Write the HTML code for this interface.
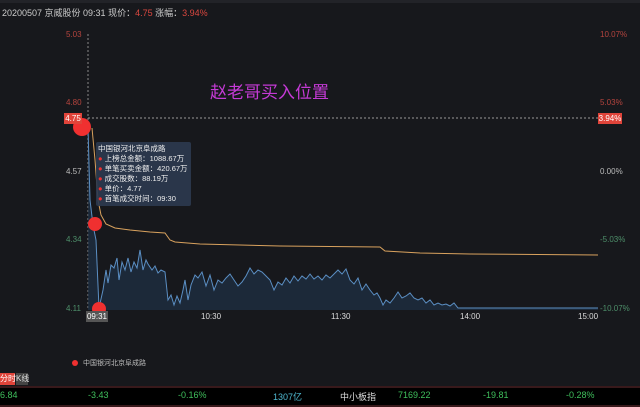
<!DOCTYPE html>
<html><head><meta charset="utf-8"><style>
body{margin:0;width:640px;height:407px;background:#17181c;overflow:hidden;position:relative;font-family:"Liberation Sans","Noto Sans CJK SC",sans-serif;}
.a{position:absolute;white-space:nowrap}
</style></head><body>
<div class="a" style="left:0;top:0;width:640px;height:3px;background:#222328"></div>
<div class="a" style="left:2px;top:6px;font-size:9px;color:#ccc">20200507 京威股份 09:31 现价：<span style="color:#d9473f">4.75</span> 涨幅：<span style="color:#d9473f">3.94%</span></div>
<div class="a" style="left:66px;top:30px;font-size:8px;color:#b5443e">5.03</div>
<div class="a" style="left:66px;top:98px;font-size:8px;color:#b5443e">4.80</div>
<div class="a" style="left:66px;top:167px;font-size:8px;color:#bbb">4.57</div>
<div class="a" style="left:66px;top:235px;font-size:8px;color:#4e8f6a">4.34</div>
<div class="a" style="left:66px;top:304px;font-size:8px;color:#4e8f6a">4.11</div>
<div class="a" style="left:600px;top:30px;font-size:8px;color:#b5443e">10.07%</div>
<div class="a" style="left:600px;top:98px;font-size:8px;color:#b5443e">5.03%</div>
<div class="a" style="left:600px;top:167px;font-size:8px;color:#bbb">0.00%</div>
<div class="a" style="left:600px;top:235px;font-size:8px;color:#4e8f6a">-5.03%</div>
<div class="a" style="left:600px;top:304px;font-size:8px;color:#4e8f6a">-10.07%</div>
<div class="a" style="left:210px;top:78px;font-size:17px;color:#c53ad6">赵老哥买入位置</div>
<svg class="a" style="left:0;top:0" width="640" height="407">
<line x1="88" y1="34" x2="88" y2="310" stroke="#888" stroke-dasharray="2,2" stroke-width="1"/>
<line x1="88" y1="118" x2="598" y2="118" stroke="#999" stroke-dasharray="2,2" stroke-width="1"/>
<path d="M88,127 L90,200 L93,225 L96,240 L99,308 L103,290 L106,270 L108,283 L111,265 L114,268 L117,258 L119,280 L122,262 L125,270 L128,258 L131,272 L134,262 L137,268 L140,250 L143,270 L146,260 L148,264 L152,270 L155,266 L158,273 L161,270 L165,272 L168,300 L171,295 L174,305 L177,296 L180,303 L183,290 L185,280 L188,300 L191,285 L195,275 L198,278 L202,272 L206,286 L210,275 L214,290 L218,280 L222,283 L226,278 L230,274 L234,280 L238,286 L242,282 L246,276 L250,268 L254,274 L258,270 L262,272 L266,276 L270,280 L274,290 L278,282 L282,285 L286,278 L290,283 L294,276 L298,281 L302,276 L306,279 L310,274 L314,279 L318,276 L322,280 L326,275 L330,278 L334,274 L338,270 L342,274 L346,269 L350,280 L354,284 L358,278 L362,290 L366,284 L370,290 L374,295 L377,293 L380,298 L383,305 L386,300 L390,303 L394,298 L398,292 L402,298 L406,296 L410,293 L414,298 L418,300 L422,298 L426,303 L430,300 L434,305 L438,303 L442,305 L446,304 L450,306 L454,303 L458,308 L598,308 L598,310 L88,310Z" fill="#1f3046" opacity="0.7"/>
<path d="M88,127 L90,200 L93,225 L96,240 L99,308 L103,290 L106,270 L108,283 L111,265 L114,268 L117,258 L119,280 L122,262 L125,270 L128,258 L131,272 L134,262 L137,268 L140,250 L143,270 L146,260 L148,264 L152,270 L155,266 L158,273 L161,270 L165,272 L168,300 L171,295 L174,305 L177,296 L180,303 L183,290 L185,280 L188,300 L191,285 L195,275 L198,278 L202,272 L206,286 L210,275 L214,290 L218,280 L222,283 L226,278 L230,274 L234,280 L238,286 L242,282 L246,276 L250,268 L254,274 L258,270 L262,272 L266,276 L270,280 L274,290 L278,282 L282,285 L286,278 L290,283 L294,276 L298,281 L302,276 L306,279 L310,274 L314,279 L318,276 L322,280 L326,275 L330,278 L334,274 L338,270 L342,274 L346,269 L350,280 L354,284 L358,278 L362,290 L366,284 L370,290 L374,295 L377,293 L380,298 L383,305 L386,300 L390,303 L394,298 L398,292 L402,298 L406,296 L410,293 L414,298 L418,300 L422,298 L426,303 L430,300 L434,305 L438,303 L442,305 L446,304 L450,306 L454,303 L458,308 L598,308" fill="none" stroke="#5b8fc4" stroke-width="1"/>
<path d="M92,128 L95,160 L98,200 L101,215 L106,224 L115,228 L130,230 L150,232 L165,233 L170,240 L175,242 L200,244 L280,246 L380,247 L385,251 L420,253 L470,254 L598,255" fill="none" stroke="#d9a25e" stroke-width="1"/>
<circle cx="82" cy="127" r="9" fill="#f03030"/>
<circle cx="95" cy="224" r="7" fill="#f03030"/>
<circle cx="99" cy="309" r="7" fill="#f03030"/>
<circle cx="75" cy="363" r="3" fill="#f03030"/>
<line x1="0" y1="387" x2="640" y2="387" stroke="#5a1a1a"/>
<line x1="0" y1="406" x2="640" y2="406" stroke="#5a1a1a"/>
</svg>
<div class="a" style="left:64px;top:113px;width:18px;height:11px;background:#e0443a;color:#fff;font-size:8px;line-height:11px;text-align:center">4.75</div>
<div class="a" style="left:598px;top:113px;width:24px;height:11px;background:#e0443a;color:#fff;font-size:8px;line-height:11px;text-align:center">3.94%</div>
<div class="a" style="left:86px;top:311px;width:22px;height:11px;background:#555;color:#fff;font-size:8px;line-height:11px;text-align:center">09:31</div>
<div class="a" style="left:201px;top:312px;font-size:8px;color:#ddd">10:30</div>
<div class="a" style="left:331px;top:312px;font-size:8px;color:#ddd">11:30</div>
<div class="a" style="left:460px;top:312px;font-size:8px;color:#ddd">14:00</div>
<div class="a" style="left:578px;top:312px;font-size:8px;color:#ddd">15:00</div>
<div class="a" style="left:96px;top:142px;width:95px;height:64px;background:#2c3a4e;opacity:.92;border-radius:2px"></div>
<div class="a" style="left:98px;top:144px;font-size:7.5px;line-height:10px;color:#eee">中国银河北京阜成路<br><span style="color:#f03030">●</span> 上榜总金额：1088.67万<br><span style="color:#f03030">●</span> 单笔买卖金额：420.67万<br><span style="color:#f03030">●</span> 成交股数：88.19万<br><span style="color:#f03030">●</span> 单价：4.77<br><span style="color:#f03030">●</span> 首笔成交时间：09:30</div>
<div class="a" style="left:83px;top:358px;font-size:7px;color:#bbb">中国银河北京阜成路</div>
<div class="a" style="left:0;top:373px;width:15px;height:12px;background:#e0443a;color:#fff;font-size:8px;line-height:12px">分时</div>
<div class="a" style="left:16px;top:373px;width:12px;height:12px;background:#444;color:#ddd;font-size:8px;line-height:12px">K线</div>
<div class="a" style="left:0;top:388px;width:640px;height:17px;background:#000"></div>
<div class="a" style="top:390px;left:0;font-size:9px;color:#3fbf5c">6.84</div>
<div class="a" style="top:390px;left:88px;font-size:9px;color:#3fbf5c">-3.43</div>
<div class="a" style="top:390px;left:178px;font-size:9px;color:#3fbf5c">-0.16%</div>
<div class="a" style="top:390px;left:273px;font-size:9px;color:#4fb8d0">1307亿</div>
<div class="a" style="top:390px;left:340px;font-size:9px;color:#ddd">中小板指</div>
<div class="a" style="top:390px;left:398px;font-size:9px;color:#3fbf5c">7169.22</div>
<div class="a" style="top:390px;left:483px;font-size:9px;color:#3fbf5c">-19.81</div>
<div class="a" style="top:390px;left:566px;font-size:9px;color:#3fbf5c">-0.28%</div>
</body></html>
